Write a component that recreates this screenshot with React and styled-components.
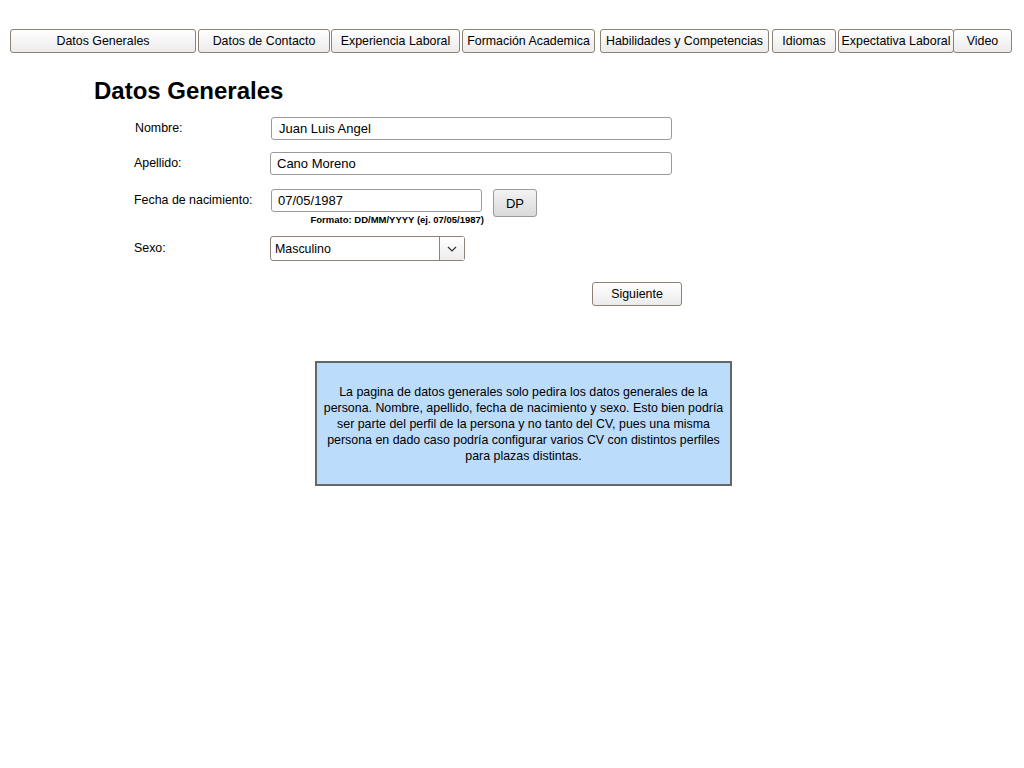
import React from "react";
import styled, { createGlobalStyle } from "styled-components";

const Global = createGlobalStyle`
  html, body { margin: 0; padding: 0; background: #fff; }
  body { font-family: "Liberation Sans", Arial, sans-serif; color: #000; }
`;

const Page = styled.div`
  width: 1024px;
  height: 768px;
  position: relative;
`;

const TabBar = styled.nav`
  display: flex;
  align-items: flex-start;
  padding: 29px 0 0 10px;
  height: 24px;
`;

const Tab = styled.button`
  box-sizing: border-box;
  width: ${(p) => p.$w}px;
  margin-left: ${(p) => p.$ml || 0}px;
  height: 24px;
  padding: 0 0 1px;
  border: 1px solid #8c8276;
  border-radius: 3px;
  background: linear-gradient(#ffffff, #ebebeb);
  font-family: "Liberation Sans", Arial, sans-serif;
  font-size: 12.4px;
  color: #000;
  white-space: nowrap;
  text-align: center;
`;

const Main = styled.main`
  padding-left: 94px;
`;

const Title = styled.h1`
  margin: 0;
  padding-top: 24px;
  font-size: 24px;
  line-height: 28px;
  font-weight: bold;
`;

const Form = styled.div`
  display: flex;
  flex-direction: column;
  padding-left: 40px;
`;

const Row = styled.div`
  display: flex;
  align-items: flex-start;
  margin-top: ${(p) => p.$mt}px;
`;

const Label = styled.label`
  width: ${(p) => 136 - (p.$shift || 0)}px;
  margin-left: ${(p) => p.$shift || 0}px;
  font-size: 12.4px;
  line-height: 14px;
  padding-top: ${(p) => p.$pt || 4}px;
`;

const Input = styled.div`
  box-sizing: border-box;
  width: ${(p) => p.$w}px;
  height: 23px;
  margin-left: ${(p) => p.$ml || 0}px;
  border: 1px solid #9a9a9a;
  border-radius: 3px;
  background: #fff;
  font-size: 13px;
  line-height: 21px;
  padding-left: ${(p) => p.$pl || 6}px;
`;

const DateCol = styled.div`
  display: flex;
  flex-direction: column;
  margin-left: 1px;
`;

const Hint = styled.div`
  font-size: 9.5px;
  font-weight: bold;
  line-height: 10px;
  margin-top: 3px;
  margin-right: -2px;
  text-align: right;
`;

const Button = styled.button`
  box-sizing: border-box;
  width: ${(p) => p.$w}px;
  height: ${(p) => p.$h}px;
  margin-left: ${(p) => p.$ml || 0}px;
  border: 1px solid ${(p) => p.$bc || "#8c8276"};
  border-radius: 3px;
  background: ${(p) => p.$bg || "linear-gradient(#ffffff, #ebebeb)"};
  font-family: "Liberation Sans", Arial, sans-serif;
  font-size: ${(p) => p.$fs || 13}px;
  color: #000;
  padding: 0;
`;

const Select = styled.div`
  box-sizing: border-box;
  display: flex;
  width: 195px;
  height: 25px;
  border: 1px solid #8c8276;
  border-radius: 3px;
  background: #fff;
  font-size: 12.4px;
`;

const SelectValue = styled.div`
  flex: 1;
  padding-left: 4px;
  line-height: 24px;
`;

const SelectArrow = styled.div`
  width: 24px;
  border-left: 1px solid #8c8276;
  background: linear-gradient(#ffffff, #ececec);
  display: flex;
  align-items: center;
  justify-content: center;
`;

const NoteWrap = styled.div`
  display: flex;
  padding-left: 315px;
  margin-top: 55px;
`;

const Note = styled.div`
  box-sizing: border-box;
  width: 417px;
  height: 125px;
  border: 2px solid #666;
  background: #bcdcfc;
  font-size: 12.4px;
  line-height: 16px;
  text-align: center;
  padding: 21px 6px 0;
`;

const tabs = [
  ["Datos Generales", 186, 0],
  ["Datos de Contacto", 132, 2],
  ["Experiencia Laboral", 129, 1],
  ["Formación Academica", 133, 2],
  ["Habilidades y Competencias", 169, 5],
  ["Idiomas", 64, 3],
  ["Expectativa Laboral", 116, 2],
  ["Video", 59, -1],
];

export default function App() {
  return (
    <Page>
      <Global />
      <TabBar>
        {tabs.map(([t, w, ml]) => (
          <Tab key={t} $w={w} $ml={ml}>
            {t}
          </Tab>
        ))}
      </TabBar>
      <Main>
        <Title>Datos Generales</Title>
        <Form>
          <Row $mt={12}>
            <Label $shift={1}>Nombre:</Label>
            <Input $w={401} $ml={1} $pl={7}>Juan Luis Angel</Input>
          </Row>
          <Row $mt={12}>
            <Label>Apellido:</Label>
            <Input $w={402}>Cano Moreno</Input>
          </Row>
          <Row $mt={14}>
            <Label>Fecha de nacimiento:</Label>
            <DateCol>
              <Input $w={211}>07/05/1987</Input>
              <Hint>Formato: DD/MM/YYYY (ej. 07/05/1987)</Hint>
            </DateCol>
            <Button $w={44} $h={28} $ml={11} $bc="#9a9a9a" $bg="linear-gradient(#f3f3f3, #d9d9d9)" $fs={13}>
              DP
            </Button>
          </Row>
          <Row $mt={11}>
            <Label $pt={5}>Sexo:</Label>
            <Select>
              <SelectValue>Masculino</SelectValue>
              <SelectArrow>
                <svg width="10" height="6" viewBox="0 0 10 6">
                  <path d="M1 1 L5 5 L9 1" fill="none" stroke="#333" strokeWidth="1.2" />
                </svg>
              </SelectArrow>
            </Select>
          </Row>
          <Row $mt={21}>
            <Button $w={90} $h={24} $ml={458} $fs={12.4}>
              Siguiente
            </Button>
          </Row>
        </Form>
      </Main>
      <NoteWrap>
        <Note>
          La pagina de datos generales solo pedira los datos generales de la
          persona. Nombre, apellido, fecha de nacimiento y sexo. Esto bien podría
          ser parte del perfil de la persona y no tanto del CV, pues una misma
          persona en dado caso podría configurar varios CV con distintos perfiles
          para plazas distintas.
        </Note>
      </NoteWrap>
    </Page>
  );
}
